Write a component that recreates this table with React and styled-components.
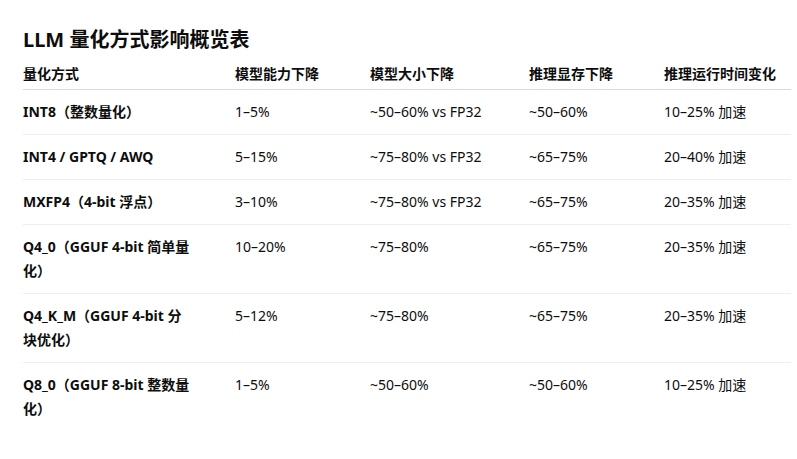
import styled, { createGlobalStyle } from 'styled-components';

const GlobalStyle = createGlobalStyle`
  body {
    margin: 0;
    background: #ffffff;
    color: #0d0d0d;
    font-family: "Noto Sans", "Noto Sans CJK SC", sans-serif;
  }
`;

const Page = styled.div`
  padding: 26px 6px 0 23px;
`;

const Title = styled.h2`
  margin: 0;
  font-size: 20px;
  line-height: 28px;
  font-weight: 700;
`;

const Table = styled.table`
  width: 768px;
  table-layout: fixed;
  border-collapse: collapse;
  font-size: 14px;
  line-height: 24px;
`;

const HeadCell = styled.th`
  text-align: left;
  font-weight: 700;
  padding: 8px 12px 3px 0;
  border-bottom: 1px solid #d9d9d9;
  white-space: nowrap;
`;

const Row = styled.tr`
  border-bottom: 1px solid ${(p) => (p.$last ? 'transparent' : '#efefef')};
`;

const Cell = styled.td`
  vertical-align: top;
  padding: 10px ${(p) => (p.$first ? '42px' : '12px')} 10px 0;
  font-weight: ${(p) => (p.$first ? 700 : 400)};
`;

const columns = [
  { title: '量化方式', width: 212 },
  { title: '模型能力下降', width: 135 },
  { title: '模型大小下降', width: 159 },
  { title: '推理显存下降', width: 135 },
  { title: '推理运行时间变化', width: 127 },
];

const rows = [
  ['INT8（整数量化）', '1–5%', '~50–60% vs FP32', '~50–60%', '10–25% 加速'],
  ['INT4 / GPTQ / AWQ', '5–15%', '~75–80% vs FP32', '~65–75%', '20–40% 加速'],
  ['MXFP4（4-bit 浮点）', '3–10%', '~75–80% vs FP32', '~65–75%', '20–35% 加速'],
  ['Q4_0（GGUF 4-bit 简单量化）', '10–20%', '~75–80%', '~65–75%', '20–35% 加速'],
  ['Q4_K_M（GGUF 4-bit 分块优化）', '5–12%', '~75–80%', '~65–75%', '20–35% 加速'],
  ['Q8_0（GGUF 8-bit 整数量化）', '1–5%', '~50–60%', '~50–60%', '10–25% 加速'],
];

export default function App() {
  return (
    <Page>
      <GlobalStyle />
      <Title>LLM 量化方式影响概览表</Title>
      <Table>
        <colgroup>
          {columns.map((c) => (
            <col key={c.title} style={{ width: c.width }} />
          ))}
        </colgroup>
        <thead>
          <tr>
            {columns.map((c) => (
              <HeadCell key={c.title}>{c.title}</HeadCell>
            ))}
          </tr>
        </thead>
        <tbody>
          {rows.map((r, i) => (
            <Row key={r[0]} $last={i === rows.length - 1}>
              {r.map((v, j) => (
                <Cell key={j} $first={j === 0}>
                  {v}
                </Cell>
              ))}
            </Row>
          ))}
        </tbody>
      </Table>
    </Page>
  );
}
